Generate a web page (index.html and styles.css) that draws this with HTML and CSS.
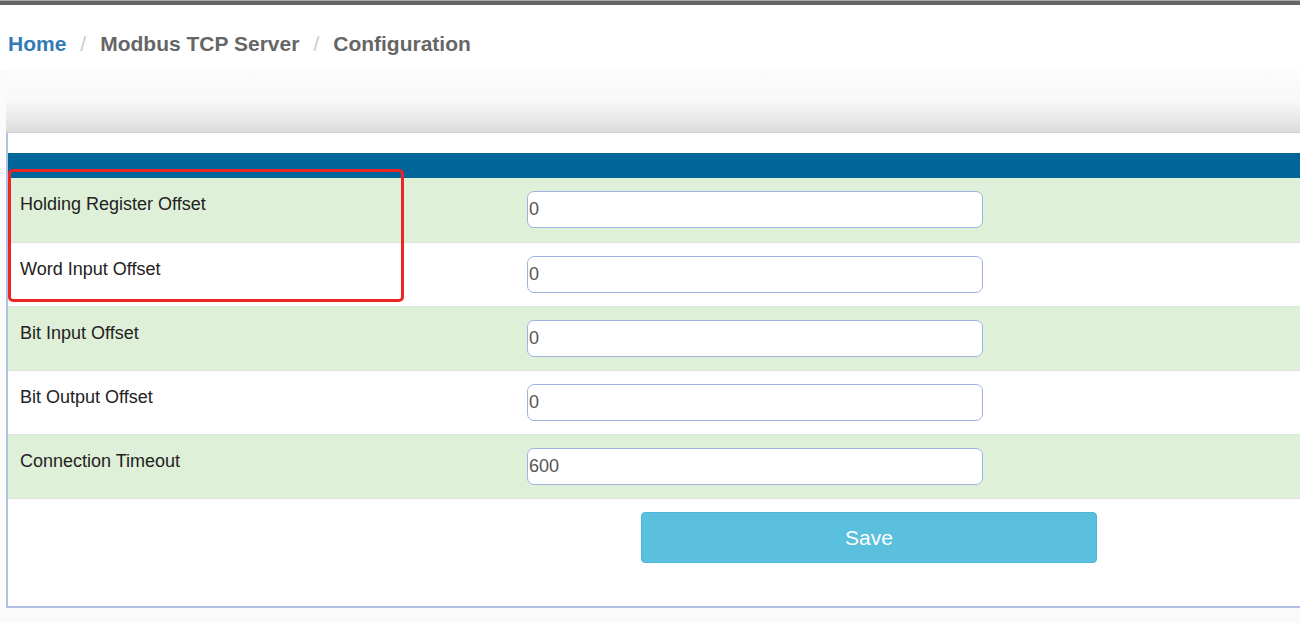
FILE: index.html
```html
<!DOCTYPE html>
<html>
<head>
  <title>Modbus TCP Server - Configuration</title>
  <link rel="stylesheet" href="styles.css">
</head>
<body>
  <div class="topbar"></div>

  <div class="breadcrumb">
    <a href="#" class="crumb-home">Home</a>
    <span class="sep">/</span>
    <span class="crumb">Modbus TCP Server</span>
    <span class="sep">/</span>
    <span class="crumb">Configuration</span>
  </div>

  <div class="panel-head"></div>

  <div class="panel">
    <div class="table-head"></div>

    <form class="config" onsubmit="return false;">
      <div class="row odd">
        <label for="holding">Holding Register Offset</label>
        <div class="field"><input type="text" id="holding" value="0"></div>
      </div>
      <div class="row">
        <label for="wordInput">Word Input Offset</label>
        <div class="field"><input type="text" id="wordInput" value="0"></div>
      </div>
      <div class="row odd">
        <label for="bitInput">Bit Input Offset</label>
        <div class="field"><input type="text" id="bitInput" value="0"></div>
      </div>
      <div class="row">
        <label for="bitOutput">Bit Output Offset</label>
        <div class="field"><input type="text" id="bitOutput" value="0"></div>
      </div>
      <div class="row odd">
        <label for="timeout">Connection Timeout</label>
        <div class="field"><input type="text" id="timeout" value="600"></div>
      </div>
      <div class="actions">
        <button type="submit" class="btn-save">Save</button>
      </div>
    </form>

    <!-- highlight round the first two rows -->
    <div class="highlight"></div>
  </div>

  <div class="footer-space"></div>
</body>
</html>
```

FILE: styles.css
```css
body {
  margin: 0;
  background-color: #fafafa;
  font-family: "Liberation Sans", Arial, sans-serif;
  overflow: hidden;
}

.topbar {
  height: 4px;
  border-top: 1px solid #a8a8a8;
  background-color: #656565;
}

.breadcrumb {
  display: flex;
  align-items: center;
  height: 65px;
  padding-left: 8px;
  background-color: #fff;
  font-size: 21px;
  font-weight: bold;
  color: #666;
  box-sizing: border-box;
  padding-top: 12px;
}

.crumb-home {
  color: #337ab7;
  text-decoration: none;
}

.sep {
  padding: 0 14px;
  font-weight: normal;
  color: #ccc;
}

.panel-head {
  height: 62px;
  margin-left: 6px;
  border-bottom: 1px solid #d0d0d0;
  background: linear-gradient(to bottom, #fcfcfc 0%, #f8f8f8 50%, #dcdcdc 100%);
}

.panel {
  position: relative;
  margin-left: 6px;
  padding-top: 20px;
  border-left: 2px solid #b3c0e6;
  border-bottom: 2px solid #b3c0e6;
  background-color: #fff;
}

.table-head {
  height: 25px;
  background-color: #00669a;
}

.row {
  display: grid;
  grid-template-columns: 507px 1fr;
  height: 64px;
  box-sizing: border-box;
  border-top: 1px solid #dde5dd;
}

.row:first-child {
  border-top: none;
}

.row.odd {
  background-color: #dff0d8;
}

.row label {
  padding: 16px 12px 0;
  font-size: 18px;
  line-height: 20px;
  color: #222;
}

.field {
  padding: 13px 0 0 12px;
}

.field input {
  width: 456px;
  height: 37px;
  box-sizing: border-box;
  padding: 0 0 0 1px;
  border: 1px solid #9fb3e3;
  border-radius: 7px;
  background-color: #fff;
  font-family: "Liberation Sans", Arial, sans-serif;
  font-size: 18px;
  color: #555;
}

.actions {
  height: 108px;
  box-sizing: border-box;
  border-top: 1px solid #dde5dd;
  padding: 13px 0 0 633px;
}

.btn-save {
  width: 456px;
  height: 51px;
  border: 1px solid #4db5d6;
  border-radius: 4px;
  background-color: #5bc0de;
  color: #fff;
  font-family: "Liberation Sans", Arial, sans-serif;
  font-size: 21px;
}

.highlight {
  position: absolute;
  left: 0;
  top: 36px;
  width: 396px;
  height: 133px;
  box-sizing: border-box;
  border: 3px solid #ec2525;
  border-radius: 5px;
}

.footer-space {
  height: 20px;
}
```
